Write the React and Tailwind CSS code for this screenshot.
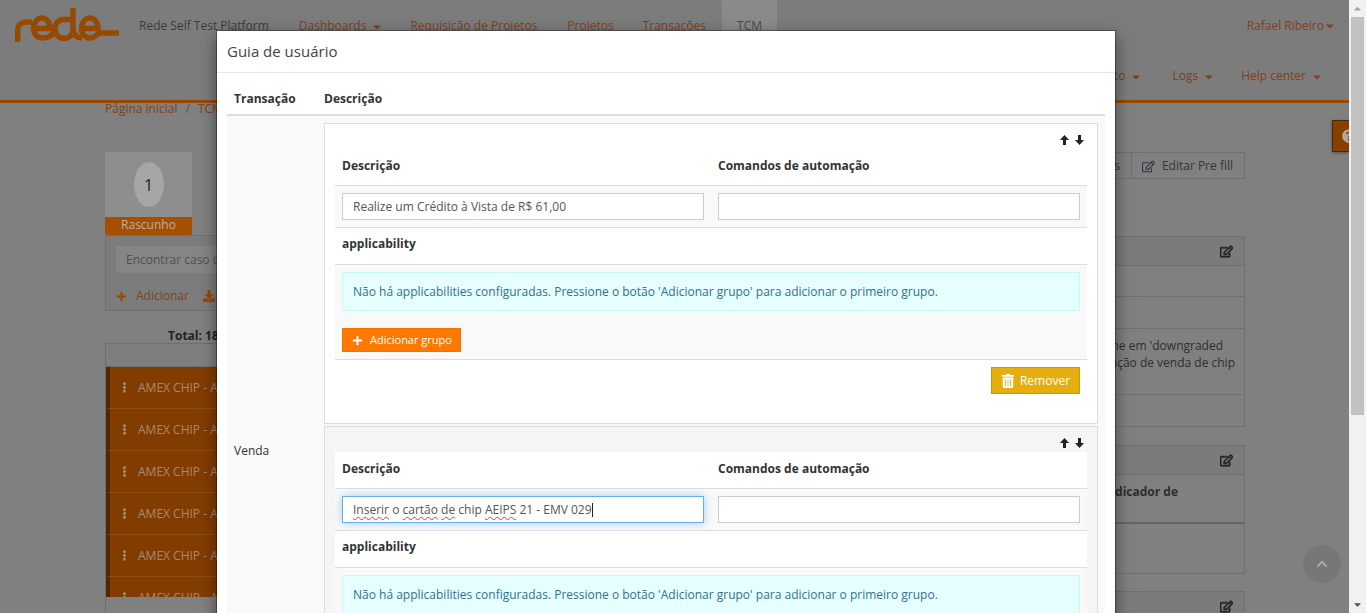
import React from 'react';
import { FaPlus, FaTrashAlt, FaRegEdit, FaDownload, FaEllipsisV, FaChevronUp, FaQuestionCircle, FaCaretDown, FaCaretUp } from 'react-icons/fa';

const NAV_ITEMS = [
  { label: 'Dashboards', caret: true, className: 'ml-[30px]' },
  { label: 'Requisição de Projetos', className: 'ml-[27px]' },
  { label: 'Projetos', className: 'ml-[30px]' },
  { label: 'Transações', className: 'ml-[29px]' },
];

const LIST_ROWS = [1, 2, 3, 4, 5, 6];

const Caret = () => <FaCaretDown className="ml-[5px] inline-block text-[12px]" />;

const RedeLogo = () => (
  <svg width="105" height="36" viewBox="0 0 105 36" fill="none" stroke="#974900" strokeWidth="5.4" strokeLinecap="butt">
    <path d="M2.700 34V22C2.700 16.500 7 14 12 14H17" />
    <path d="M19 20.500H35C35 14 31 10 27 10C22 10 18.500 15 18.500 20.500C18.500 26 22 30 28 30C33 30 36 28 40 24" />
    <path d="M58 0V22C58 27 54 30.500 49 30.500C44 30.500 40 26 40 21C40 15 44 11.500 49 11.500H58" />
    <path d="M58 20C58 26 61 30 67 30" />
    <path d="M67 20.500H83C83 14 79 10 75 10C70 10 66.500 15 66.500 20.500C66.500 26 70 30 76 30C80 30 82 25 86 25H104" />
  </svg>
);

const ArrowIcon = ({ down }) => (
  <svg width="9" height="10" viewBox="0 0 9 10" fill="#222">
    {down ? <polygon points="3,0 6,0 6,5 9,5 4.5,10 0,5 3,5" /> : <polygon points="4.500,0 9,5 6,5 6,10 3,10 3,5 0,5" />}
  </svg>
);

const SidePanel = ({ className, children }) => (
  <div className={`border border-[#6f6f6f] ${className}`}>
    <div className="flex h-[29px] items-center justify-end border-b border-[#6f6f6f] bg-[#7b7b7b] pr-[11px] text-[#222]">
      <FaRegEdit className="text-[13px] [stroke-width:30]" />
    </div>
    {children}
  </div>
);

const Page = () => (
  <div className="h-full bg-[#808080] text-[12px]">
    <header className="flex h-[103px] border-b-[3px] border-[#974900] bg-[#7c7c7c] text-[#80401a]">
      <div className="ml-[15px] mt-[8px]">
        <RedeLogo />
      </div>
      <div className="min-w-0 flex-1">
        <div className="flex h-[52px] items-center">
          <span className="ml-[19px] text-[#3c3c3c]">Rede Self Test Platform</span>
          {NAV_ITEMS.map((item) => (
            <span key={item.label} className={item.className}>
              {item.label}
              {item.caret && <Caret />}
            </span>
          ))}
          <span className="ml-[16px] flex h-full w-[55px] items-center justify-center bg-[#8a8a8a] text-[#4a4a4a]">TCM</span>
          <span className="ml-auto mr-[13px] flex items-center">
            Rafael Ribeiro
            <FaCaretDown className="text-[12px]" />
          </span>
        </div>
        <div className="flex h-[48px] items-center justify-end pr-[26px]">
          <span>Relatório de Faturamento<Caret /></span>
          <span className="ml-[30px]">Logs<Caret /></span>
          <span className="ml-[26px]">Help center<Caret /></span>
        </div>
      </div>
    </header>

    <div className="flex pl-[105px] pr-[104px]">
      <div className="w-[260px] shrink-0">
        <div className="flex h-[12px] items-center text-[#80401a]">
          Página inicial <span className="mx-[8px] text-[#555]">/</span> TCM
        </div>
        <div className="mt-[37px] flex h-[65px] w-[87px] items-center justify-center bg-[#8e8e8e]">
          <span className="flex h-[45px] w-[30px] items-center justify-center rounded-[50%] bg-[#a6a6a6] text-[16px] text-[#222]">1</span>
        </div>
        <div className="flex h-[18px] w-[87px] items-center justify-center rounded-b-[2px] bg-[#a54f00] pb-[2px] text-[#b9b0a0]">Rascunho</div>
        <div className="h-[76px] border border-[#707070] bg-[#7c7c7c] px-[10px] pt-[10px]">
          <div className="flex h-[27px] items-center bg-[#858585] px-[10px] text-[#505050]">Encontrar caso de teste</div>
          <div className="mt-[14px] flex items-center text-[#80401a]">
            <FaPlus className="mr-[9px] text-[11px] text-[#974900]" />
            Adicionar
            <FaDownload className="ml-[14px] text-[12px] text-[#974900]" />
          </div>
        </div>
        <div className="flex h-[32px] items-end pl-[63px] font-bold leading-[15px] text-[#222]">Total: 18</div>
        <div className="h-[300px] border border-[#6f6f6f]">
          <div className="h-[23px] border-b border-[#6f6f6f] bg-[#7f7f7f]" />
          <div className="h-[230px] overflow-hidden">
            {LIST_ROWS.map((row) => (
              <div key={row} className="flex h-[42px] items-center border-b border-[#8f4c10] border-l-[4px] border-l-[#4f2600] bg-[#823c00] pl-[9px] text-[#a58a70]">
                <FaEllipsisV className="mr-[8px] text-[11px] text-[#a58a70]" />
                AMEX CHIP - AEIPS
              </div>
            ))}
          </div>
        </div>
      </div>

      <div className="min-w-0 flex-1 pt-[49px] text-[#2e2e2e]">
        <div className="flex justify-end">
          <span className="flex h-[27px] items-center border border-[#6f6f6f] px-[11px] pt-[1px] text-[#333]">Pre fills</span>
          <span className="flex h-[27px] items-center border border-l-0 border-[#6f6f6f] pl-[10px] pr-[11px] pt-[1px] text-[#303840]">
            <FaRegEdit className="mr-[7px] text-[13px]" />
            Editar Pre fill
          </span>
        </div>
        <SidePanel className="mt-[57px]">
          <div className="h-[31px] border-b border-[#6f6f6f]" />
          <div className="h-[32px] border-b border-[#6f6f6f]" />
          <div className="h-[66px] border-b border-[#6f6f6f] pt-[8px] leading-[17px]">
            <div className="pr-[21px] text-right">o terminal funcione em 'downgraded</div>
            <div className="pr-[9px] text-right">durante a transação de venda de chip</div>
          </div>
          <div className="h-[31px]" />
        </SidePanel>
        <SidePanel className="mt-[18px]">
          <div className="h-[49px] border-b-2 border-[#666] pr-[66px] pt-[8px] text-right font-bold">com o indicador de</div>
          <div className="h-[49px]" />
        </SidePanel>
        <SidePanel className="mt-[17px]" />
      </div>
    </div>
  </div>
);

const Field = ({ focused, children }) => (
  <div
    className={`flex h-[27px] items-center border bg-white px-[10px] text-[#555] ${
      focused ? 'border-[#66afe9] shadow-[0_0_8px_rgba(102,175,233,0.6)]' : 'border-[#ccc]'
    }`}
  >
    <span className="whitespace-pre">{children}</span>
  </div>
);

const Misspelled = ({ children }) => (
  <span className="underline decoration-red-500 decoration-wavy decoration-1 underline-offset-2 [text-decoration-skip-ink:none]">{children}</span>
);

const StepCard = ({ muted, focused, description, withFooter }) => (
  <div className={`relative mb-[2px] border border-[#ddd] px-[10px] pt-[25px] ${muted ? 'bg-[#f5f5f5]' : 'bg-white'} ${withFooter ? 'h-[301px]' : ''}`}>
    <div className="absolute right-[13px] top-[11px] flex gap-[6px]">
      <ArrowIcon />
      <ArrowIcon down />
    </div>
    <div className="grid h-[37px] grid-cols-2 items-center border-b border-[#ddd] bg-white px-[7px] font-bold text-[#333]">
      <span className="pb-[3px]">Descrição</span>
      <span className="pb-[3px] pl-[7px]">Comandos de automação</span>
    </div>
    <div className="grid h-[42px] grid-cols-2 border-b border-[#ddd] bg-[#f9f9f9]">
      <div className="px-[7px] pt-[7px]"><Field focused={focused}>{description}</Field></div>
      <div className="px-[7px] pt-[7px]"><Field /></div>
    </div>
    <div className="flex h-[37px] items-center border-b border-[#ddd] bg-white px-[7px] pb-[4px] font-bold text-[#333]">applicability</div>
    <div className="h-[95px] border-b border-[#ddd] bg-[#f9f9f9] px-[7px] pt-[7px]">
      <div className="flex h-[39px] items-center border border-[#c5fbf5] bg-[#e6ffff] px-[10px] text-[#31708f]">
        Não há applicabilities configuradas. Pressione o botão 'Adicionar grupo' para adicionar o primeiro grupo.
      </div>
      <button type="button" className="mt-[17px] flex h-[24px] w-[119px] items-center border border-[#f07000] bg-[#ff7800] pl-[9px] text-[11px] text-white">
        <FaPlus className="mr-[7px] text-[11px]" />
        Adicionar grupo
      </button>
    </div>
    {withFooter && (
      <div className="flex justify-end pr-[7px] pt-[7px]">
        <button type="button" className="flex h-[27px] w-[89px] items-center justify-center border border-[#c9980a] bg-[#e6ae0c] text-white">
          <FaTrashAlt className="mr-[5px] text-[14px]" />
          Remover
        </button>
      </div>
    )}
  </div>
);

const GuideModal = () => (
  <div className="absolute left-[217px] top-[31px] h-[640px] w-[898px] overflow-hidden bg-white text-[12px] text-[#333] shadow-[0_0_0_1px_rgba(0,0,0,0.3),0_5px_15px_rgba(0,0,0,0.5)]">
    <div className="flex h-[42px] items-center border-b border-[#e5e5e5] pl-[10px] text-[15px] text-[#444]">Guia de usuário</div>
    <div className="px-[10px]">
      <div className="grid h-[43px] grid-cols-[90px_1fr] items-center border-b-2 border-[#ddd] pt-[10px] font-bold">
        <span className="pl-[7px]">Transação</span>
        <span className="pl-[7px]">Descrição</span>
      </div>
      <div className="grid grid-cols-[90px_1fr] bg-[#f9f9f9]">
        <div className="pl-[7px] pt-[326px]">Venda</div>
        <div className="px-[7px] pt-[7px]">
          <StepCard withFooter description="Realize um Crédito à Vista de R$ 61,00" />
          <StepCard
            muted
            focused
            description={
              <>
                <Misspelled>Inserir</Misspelled> o <Misspelled>cartão</Misspelled> <Misspelled>de</Misspelled> chip <Misspelled>AEIPS</Misspelled> 21 - EMV 029
                <span className="inline-block h-[14px] w-px bg-[#222] align-middle" />
              </>
            }
          />
        </div>
      </div>
    </div>
  </div>
);

const Scrollbar = () => (
  <div className="flex w-[17px] shrink-0 flex-col items-center bg-[#f1f1f1] text-[#777]">
    <div className="flex h-[17px] items-center justify-center"><FaCaretUp className="text-[11px] text-[#a3a3a3]" /></div>
    <div className="h-[398px] w-[13px] bg-[#c1c1c1]" />
    <div className="mt-auto flex h-[17px] items-center justify-center"><FaCaretDown className="text-[11px] text-[#505050]" /></div>
  </div>
);

export default function App() {
  return (
    <div className="flex h-[613px] overflow-hidden font-['Open_Sans',sans-serif]">
      <div className="relative min-w-0 flex-1 overflow-hidden">
        <Page />
        <GuideModal />
        <div className="absolute right-0 top-[120px] flex h-[32px] w-[17px] items-center overflow-hidden border border-r-0 border-[#4f2600] bg-[#854000] pl-[9px] shadow-[0_1px_3px_rgba(0,0,0,0.4)]">
          <FaQuestionCircle className="shrink-0 text-[14px] text-[#b0a8a0]" />
        </div>
        <div className="absolute left-[1303px] top-[545px] flex h-[38px] w-[38px] items-center justify-center rounded-full bg-[#777]">
          <FaChevronUp className="text-[12px] text-[#ababab]" />
        </div>
      </div>
      <Scrollbar />
    </div>
  );
}
